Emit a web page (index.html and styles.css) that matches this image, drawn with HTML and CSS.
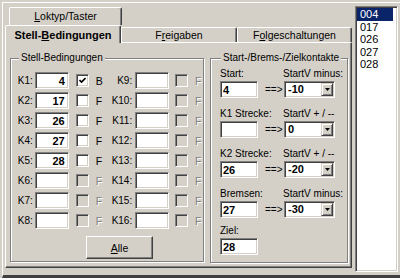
FILE: index.html
```html
<!DOCTYPE html>
<html lang="de">
<head>
    <meta charset="UTF-8">
    <title>Stell-Bedingungen</title>
    <link rel="stylesheet" href="styles.css">
</head>
<body>

<div class="frame">
    <div class="tabs">
        <!-- back row -->
        <div class="tab-row back">
            <div class="tab"><u>L</u>oktyp/Taster</div>
        </div>
        <!-- front row -->
        <div class="tab-row front">
            <div class="tab sel">Stell-<u>B</u>edingungen</div>
            <div class="tab">F<u>r</u>eigaben</div>
            <div class="tab last">F<u>o</u>lgeschaltungen</div>
        </div>

        <div class="panel">
            <fieldset class="group cond">
                <legend>Stell-Bedingungen</legend>
                <div class="body">
                    <div class="rows">
                        <div class="row">
                            <span class="lbl">K1:</span><input class="field num" value="4"><span class="cb"><svg width="7" height="7" viewBox="0 0 7 7"><polyline points="0.5,3 2.5,5 6.5,1" fill="none" stroke="#000" stroke-width="1.6"/></svg></span><span class="flag">B</span>
                            <span class="lbl wide">K9:</span><input class="field num second" value=""><span class="cb off second"></span><span class="flag off">F</span>
                        </div>
                        <div class="row">
                            <span class="lbl">K2:</span><input class="field num" value="17"><span class="cb"></span><span class="flag">F</span>
                            <span class="lbl wide">K10:</span><input class="field num second" value=""><span class="cb off second"></span><span class="flag off">F</span>
                        </div>
                        <div class="row">
                            <span class="lbl">K3:</span><input class="field num" value="26"><span class="cb"></span><span class="flag">F</span>
                            <span class="lbl wide">K11:</span><input class="field num second" value=""><span class="cb off second"></span><span class="flag off">F</span>
                        </div>
                        <div class="row">
                            <span class="lbl">K4:</span><input class="field num" value="27"><span class="cb"></span><span class="flag">F</span>
                            <span class="lbl wide">K12:</span><input class="field num second" value=""><span class="cb off second"></span><span class="flag off">F</span>
                        </div>
                        <div class="row">
                            <span class="lbl">K5:</span><input class="field num" value="28"><span class="cb"></span><span class="flag">F</span>
                            <span class="lbl wide">K13:</span><input class="field num second" value=""><span class="cb off second"></span><span class="flag off">F</span>
                        </div>
                        <div class="row">
                            <span class="lbl">K6:</span><input class="field num" value=""><span class="cb off"></span><span class="flag off">F</span>
                            <span class="lbl wide">K14:</span><input class="field num second" value=""><span class="cb off second"></span><span class="flag off">F</span>
                        </div>
                        <div class="row">
                            <span class="lbl">K7:</span><input class="field num" value=""><span class="cb off"></span><span class="flag off">F</span>
                            <span class="lbl wide">K15:</span><input class="field num second" value=""><span class="cb off second"></span><span class="flag off">F</span>
                        </div>
                        <div class="row">
                            <span class="lbl">K8:</span><input class="field num" value=""><span class="cb off"></span><span class="flag off">F</span>
                            <span class="lbl wide">K16:</span><input class="field num second" value=""><span class="cb off second"></span><span class="flag off">F</span>
                        </div>
                    </div>
                    <button class="btn"><u>A</u>lle</button>
                </div>
            </fieldset>

            <fieldset class="group contacts">
                <legend>Start-/Brems-/Zielkontakte</legend>
                <div class="body">
                    <div class="pair">
                        <span>Start:</span><span class="right">StartV minus:</span>
                        <div class="inrow"><input class="field txt" value="4"><span class="arrow">==&gt;</span></div>
                        <div class="combo"><span class="val">-10</span><span class="drop"><svg width="5" height="3" viewBox="0 0 5 3"><polygon points="0,0 5,0 2.5,3" fill="#000"/></svg></span></div>
                    </div>
                    <div class="pair">
                        <span>K1 Strecke:</span><span class="right">StartV + / --</span>
                        <div class="inrow"><input class="field txt" value=""><span class="arrow">==&gt;</span></div>
                        <div class="combo"><span class="val">0</span><span class="drop"><svg width="5" height="3" viewBox="0 0 5 3"><polygon points="0,0 5,0 2.5,3" fill="#000"/></svg></span></div>
                    </div>
                    <div class="pair">
                        <span>K2 Strecke:</span><span class="right">StartV + / --</span>
                        <div class="inrow"><input class="field txt" value="26"><span class="arrow">==&gt;</span></div>
                        <div class="combo"><span class="val">-20</span><span class="drop"><svg width="5" height="3" viewBox="0 0 5 3"><polygon points="0,0 5,0 2.5,3" fill="#000"/></svg></span></div>
                    </div>
                    <div class="pair">
                        <span>Bremsen:</span><span class="right">StartV minus:</span>
                        <div class="inrow"><input class="field txt" value="27"><span class="arrow">==&gt;</span></div>
                        <div class="combo"><span class="val">-30</span><span class="drop"><svg width="5" height="3" viewBox="0 0 5 3"><polygon points="0,0 5,0 2.5,3" fill="#000"/></svg></span></div>
                    </div>
                    <div class="pair goal">
                        <span>Ziel:</span><span></span>
                        <div class="inrow"><input class="field txt" value="28"></div>
                    </div>
                </div>
            </fieldset>
        </div>
    </div>

    <!-- Lok list -->
    <div class="list">
        <div class="item selected">004</div>
        <div class="item">017</div>
        <div class="item">026</div>
        <div class="item">027</div>
        <div class="item">028</div>
    </div>
</div>

</body>
</html>
```

FILE: styles.css
```css
body {
    margin: 0;
    width: 400px;
    height: 278px;
    overflow: hidden;
    background-color: #d4d0c8;
    font-family: "Liberation Sans", Arial, sans-serif;
    font-size: 10px;
    color: #000;
}

.frame {
    display: flex;
    margin: 2px 0 0 2px;
    height: 272px;
    border-top: 1px solid #fff;
    border-left: 1px solid #fff;
    border-bottom: 3px solid #404040;
}

/* tab control */
.tabs {
    width: 347px;
    margin: 4px 0 0 2px;
}

.tab-row.back {
    height: 18px;
}

.tab-row.front {
    display: flex;
    align-items: flex-end;
    height: 17px;
}

.tab {
    box-sizing: border-box;
    border-top: 1px solid #fff;
    border-left: 1px solid #fff;
    border-right: 1px solid #404040;
    box-shadow: inset -1px 0 #808080;
    border-radius: 2px 2px 0 0;
    background-color: #d4d0c8;
    text-align: center;
    line-height: 13px;
    font-size: 10.5px;
}

.back .tab {
    width: 113px;
    height: 18px;
    margin-left: 4px;
    padding-top: 2px;
}

.front .tab {
    width: 116px;
    height: 15px;
    padding-top: 1px;
}

.front .tab.last {
    width: 115px;
}

.front .tab.sel {
    position: relative;
    z-index: 1;
    height: 18px;
    margin-bottom: -1px;
    padding-top: 3px;
    font-weight: bold;
    font-size: 11px;
}

.panel {
    box-sizing: border-box;
    display: flex;
    height: 226px;
    padding: 9px 0 0 4px;
    border-top: 1px solid #fff;
    border-left: 1px solid #fff;
    border-right: 1px solid #404040;
    border-bottom: 1px solid #404040;
    box-shadow: inset -1px -1px #808080;
}

/* group boxes */
.group {
    box-sizing: border-box;
    margin: 0;
    padding: 0;
    min-width: 0;
    border: 1px solid #808080;
    box-shadow: inset 1px 1px #fff, 1px 1px #fff;
    align-self: flex-start;
}

.group legend {
    margin-left: 8px;
    padding: 0 2px;
    line-height: 12px;
    background-color: #d4d0c8;
}

.cond {
    width: 194px;
}

.cond .body {
    padding: 8px 0 2px 0;
}

.contacts {
    width: 138px;
    height: 211px;
    margin-left: 6px;
}

.contacts legend {
    margin-left: 10px;
}

.contacts .body {
    padding: 3px 0 0 9px;
}

.rows {
    display: flex;
    flex-direction: column;
    gap: 3px;
}

.row {
    display: flex;
    align-items: center;
    height: 17px;
}

.lbl {
    width: 22px;
    text-align: right;
}

.lbl.wide {
    width: 29px;
}

/* sunken edit fields */
.field {
    box-sizing: border-box;
    height: 17px;
    margin: 0;
    border: 1px solid;
    border-color: #808080 #fff #fff #808080;
    box-shadow: inset 1px 1px #404040, inset -1px -1px #d4d0c8;
    background-color: #fff;
    font-family: "Liberation Sans", Arial, sans-serif;
    font-size: 11px;
    font-weight: bold;
    color: #000;
    outline: none;
}

.field.num {
    width: 34px;
    margin-left: 2px;
    padding: 0 3px 0 0;
    text-align: right;
}

.field.num.second {
    margin-left: 3px;
}

.field.txt {
    width: 38px;
    padding: 0 0 0 2px;
}

.cb {
    box-sizing: border-box;
    display: flex;
    align-items: center;
    justify-content: center;
    width: 13px;
    height: 13px;
    margin-left: 7px;
    border: 1px solid;
    border-color: #808080 #fff #fff #808080;
    box-shadow: inset 1px 1px #404040, inset -1px -1px #d4d0c8;
    background-color: #fff;
}

.cb.second {
    margin-left: 6px;
}

.cb.off {
    background-color: #d4d0c8;
}

.flag {
    width: 8px;
    margin-left: 7px;
    font-size: 10.5px;
}

.flag.off {
    color: #808080;
    text-shadow: 1px 1px #fff;
}

.btn {
    box-sizing: border-box;
    display: block;
    width: 67px;
    height: 23px;
    margin: 7px 0 0 75px;
    padding: 0;
    border: 1px solid;
    border-color: #fff #404040 #404040 #fff;
    box-shadow: inset -1px -1px #808080;
    background-color: #d4d0c8;
    font-family: "Liberation Sans", Arial, sans-serif;
    font-size: 10.5px;
    color: #000;
}

/* start / brake / target contacts */
.pair {
    display: grid;
    grid-template-columns: 63px auto;
    row-gap: 1px;
    line-height: 13px;
}

.pair + .pair {
    margin-top: 9px;
}

.pair.goal {
    margin-top: 6px;
}

.inrow {
    display: flex;
    align-items: center;
}

.arrow {
    margin-left: 7px;
}

.combo {
    box-sizing: border-box;
    display: flex;
    align-items: center;
    width: 51px;
    height: 17px;
    margin-left: 1px;
    border: 1px solid;
    border-color: #808080 #fff #fff #808080;
    box-shadow: inset 1px 1px #404040, inset -1px -1px #d4d0c8;
    background-color: #fff;
    font-size: 11px;
    font-weight: bold;
}

.combo .val {
    flex: 1;
    padding-left: 3px;
}

.combo .drop {
    box-sizing: border-box;
    display: flex;
    align-items: center;
    justify-content: center;
    width: 12px;
    height: 13px;
    margin-right: 1px;
    border: 1px solid;
    border-color: #d4d0c8 #404040 #404040 #d4d0c8;
    box-shadow: inset 1px 1px #fff, inset -1px -1px #808080;
    background-color: #d4d0c8;
}

/* list box */
.list {
    box-sizing: border-box;
    width: 43px;
    height: 266px;
    margin: 3px 0 0 3px;
    border: 1px solid;
    border-color: #808080 #fff #fff #808080;
    box-shadow: inset 1px 1px #404040, inset -1px -1px #d4d0c8;
    background-color: #fff;
    padding: 1px;
    font-size: 11px;
}

.item {
    width: 36px;
    padding-left: 3px;
    box-sizing: border-box;
    line-height: 12.5px;
}

.item.selected {
    background-color: #0a246a;
    color: #fff;
}
```
